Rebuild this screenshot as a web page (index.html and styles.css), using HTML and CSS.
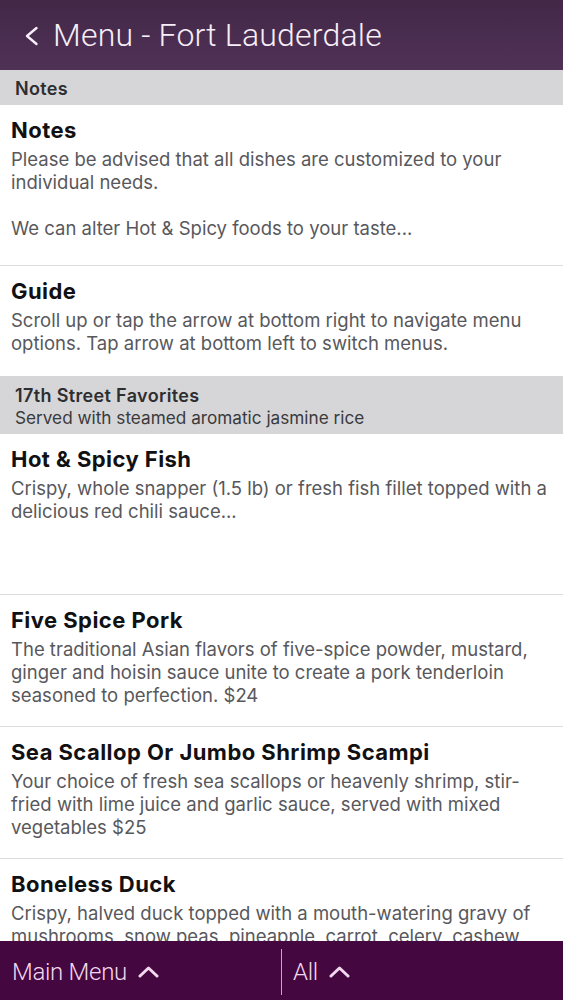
FILE: index.html
```html
<!DOCTYPE html>
<html lang="en">
<head>
<meta charset="utf-8">
<title>Menu - Fort Lauderdale</title>
<link rel="stylesheet" href="styles.css">
</head>
<body>
<div class="app">
  <header class="topbar">
    <svg class="back" width="14" height="20" viewBox="0 0 14 20"><polyline points="11.5,2 2,10 11.5,18" fill="none" stroke="#f7eef8" stroke-width="2.4" stroke-linecap="round" stroke-linejoin="round"/></svg>
    <h1 class="title">Menu - Fort Lauderdale</h1>
  </header>

  <main class="list">
    <div class="section section-single"><span class="section-title">Notes</span></div>
    <div class="item tall">
      <div class="item-title">Notes</div>
      <p class="item-body">Please be advised that all dishes are customized to your individual needs.<br><br>We can alter Hot &amp; Spicy foods to your taste...</p>
    </div>
    <div class="item no-border">
      <div class="item-title">Guide</div>
      <p class="item-body">Scroll up or tap the arrow at bottom right to navigate menu options. Tap arrow at bottom left to switch menus.</p>
    </div>

    <div class="section section-double">
      <span class="section-title">17th Street Favorites</span>
      <span class="section-sub">Served with steamed aromatic jasmine rice</span>
    </div>
    <div class="item tall">
      <div class="item-title">Hot &amp; Spicy Fish</div>
      <p class="item-body">Crispy, whole snapper (1.5 lb) or fresh fish fillet topped with a delicious red chili sauce...</p>
    </div>
    <div class="item">
      <div class="item-title">Five Spice Pork</div>
      <p class="item-body">The traditional Asian flavors of five-spice powder, mustard, ginger and hoisin sauce unite to create a pork tenderloin seasoned to perfection. $24</p>
    </div>
    <div class="item">
      <div class="item-title">Sea Scallop Or Jumbo Shrimp Scampi</div>
      <p class="item-body">Your choice of fresh sea scallops or heavenly shrimp, stir-fried with lime juice and garlic sauce, served with mixed vegetables $25</p>
    </div>
    <div class="item">
      <div class="item-title">Boneless Duck</div>
      <p class="item-body">Crispy, halved duck topped with a mouth-watering gravy of mushrooms, snow peas, pineapple, carrot, celery, cashew nuts and onions. $26</p>
    </div>
  </main>

  <footer class="bottombar">
    <div class="tab tab-main">
      <span class="tab-label">Main Menu</span>
      <svg class="caret" width="21" height="12" viewBox="0 0 21 12"><polyline points="2,10 10.5,2 19,10" fill="none" stroke="#f3d9f0" stroke-width="3" stroke-linecap="round" stroke-linejoin="round"/></svg>
    </div>
    <div class="tab tab-all">
      <span class="tab-label">All</span>
      <svg class="caret" width="21" height="12" viewBox="0 0 21 12"><polyline points="2,10 10.5,2 19,10" fill="none" stroke="#f3d9f0" stroke-width="3" stroke-linecap="round" stroke-linejoin="round"/></svg>
    </div>
  </footer>
</div>
</body>
</html>
```

FILE: styles.css
```css
* { box-sizing: border-box; }
html, body { margin: 0; padding: 0; }
body {
  background: #ffffff;
  font-family: "Inter", "Liberation Sans", sans-serif;
  -webkit-font-smoothing: antialiased;
}
.app {
  height: 1000px;
  display: flex;
  flex-direction: column;
  overflow: hidden;
}
.topbar {
  flex: 0 0 70px;
  height: 70px;
  display: flex;
  align-items: center;
  padding-left: 25px;
  background: linear-gradient(#432848, #4f3156);
  color: #f7eef8;
}
.back { display: block; margin-right: 14px; margin-top: 1px; }
.title {
  margin: 0;
  font-family: "Roboto", "Liberation Sans", sans-serif;
  font-weight: 300;
  font-size: 32px;
  letter-spacing: 0.2px;
  line-height: 1;
}
.list {
  flex: 1 1 auto;
  overflow: hidden;
}
.section {
  background: #d6d6d8;
  color: #2e2e30;
  padding-left: 15px;
  display: flex;
  flex-direction: column;
  justify-content: center;
}
.section-single { height: 35px; padding-top: 3px; }
.section-double { height: 58px; padding-top: 4px; }
.section-title {
  font-size: 18px;
  font-weight: 600;
  letter-spacing: 0.35px;
  line-height: 22px;
}
.section-sub {
  font-size: 17.2px;
  font-weight: 400;
  line-height: 22px;
  color: #3a3a3c;
}
.item {
  padding: 11px 8px 19px 11px;
  border-bottom: 1px solid #dcdcde;
}
.item.no-border { border-bottom: none; padding-bottom: 21px; }
.item.tall { min-height: 161px; }
.item-title {
  font-size: 22px;
  font-weight: 700;
  letter-spacing: 0.45px;
  line-height: 29px;
  color: #111113;
}
.item-body {
  margin: 3px 0 0;
  font-size: 18.5px;
  line-height: 23px;
  color: #58585c;
}
.bottombar {
  flex: 0 0 59px;
  height: 59px;
  background: #44073f;
  display: flex;
  align-items: center;
  color: #f3d9f0;
}
.tab {
  display: flex;
  align-items: center;
  gap: 11px;
  height: 46px;
  margin-top: 2px;
}
.tab-main {
  width: 282px;
  padding-left: 12px;
  border-right: 1px solid #c7a6c4;
}
.tab-all { padding-left: 11px; }
.tab-label {
  font-family: "Roboto", "Liberation Sans", sans-serif;
  font-weight: 300;
  font-size: 24px;
  letter-spacing: -0.3px;
  line-height: 1;
}
.caret { display: block; }
```
